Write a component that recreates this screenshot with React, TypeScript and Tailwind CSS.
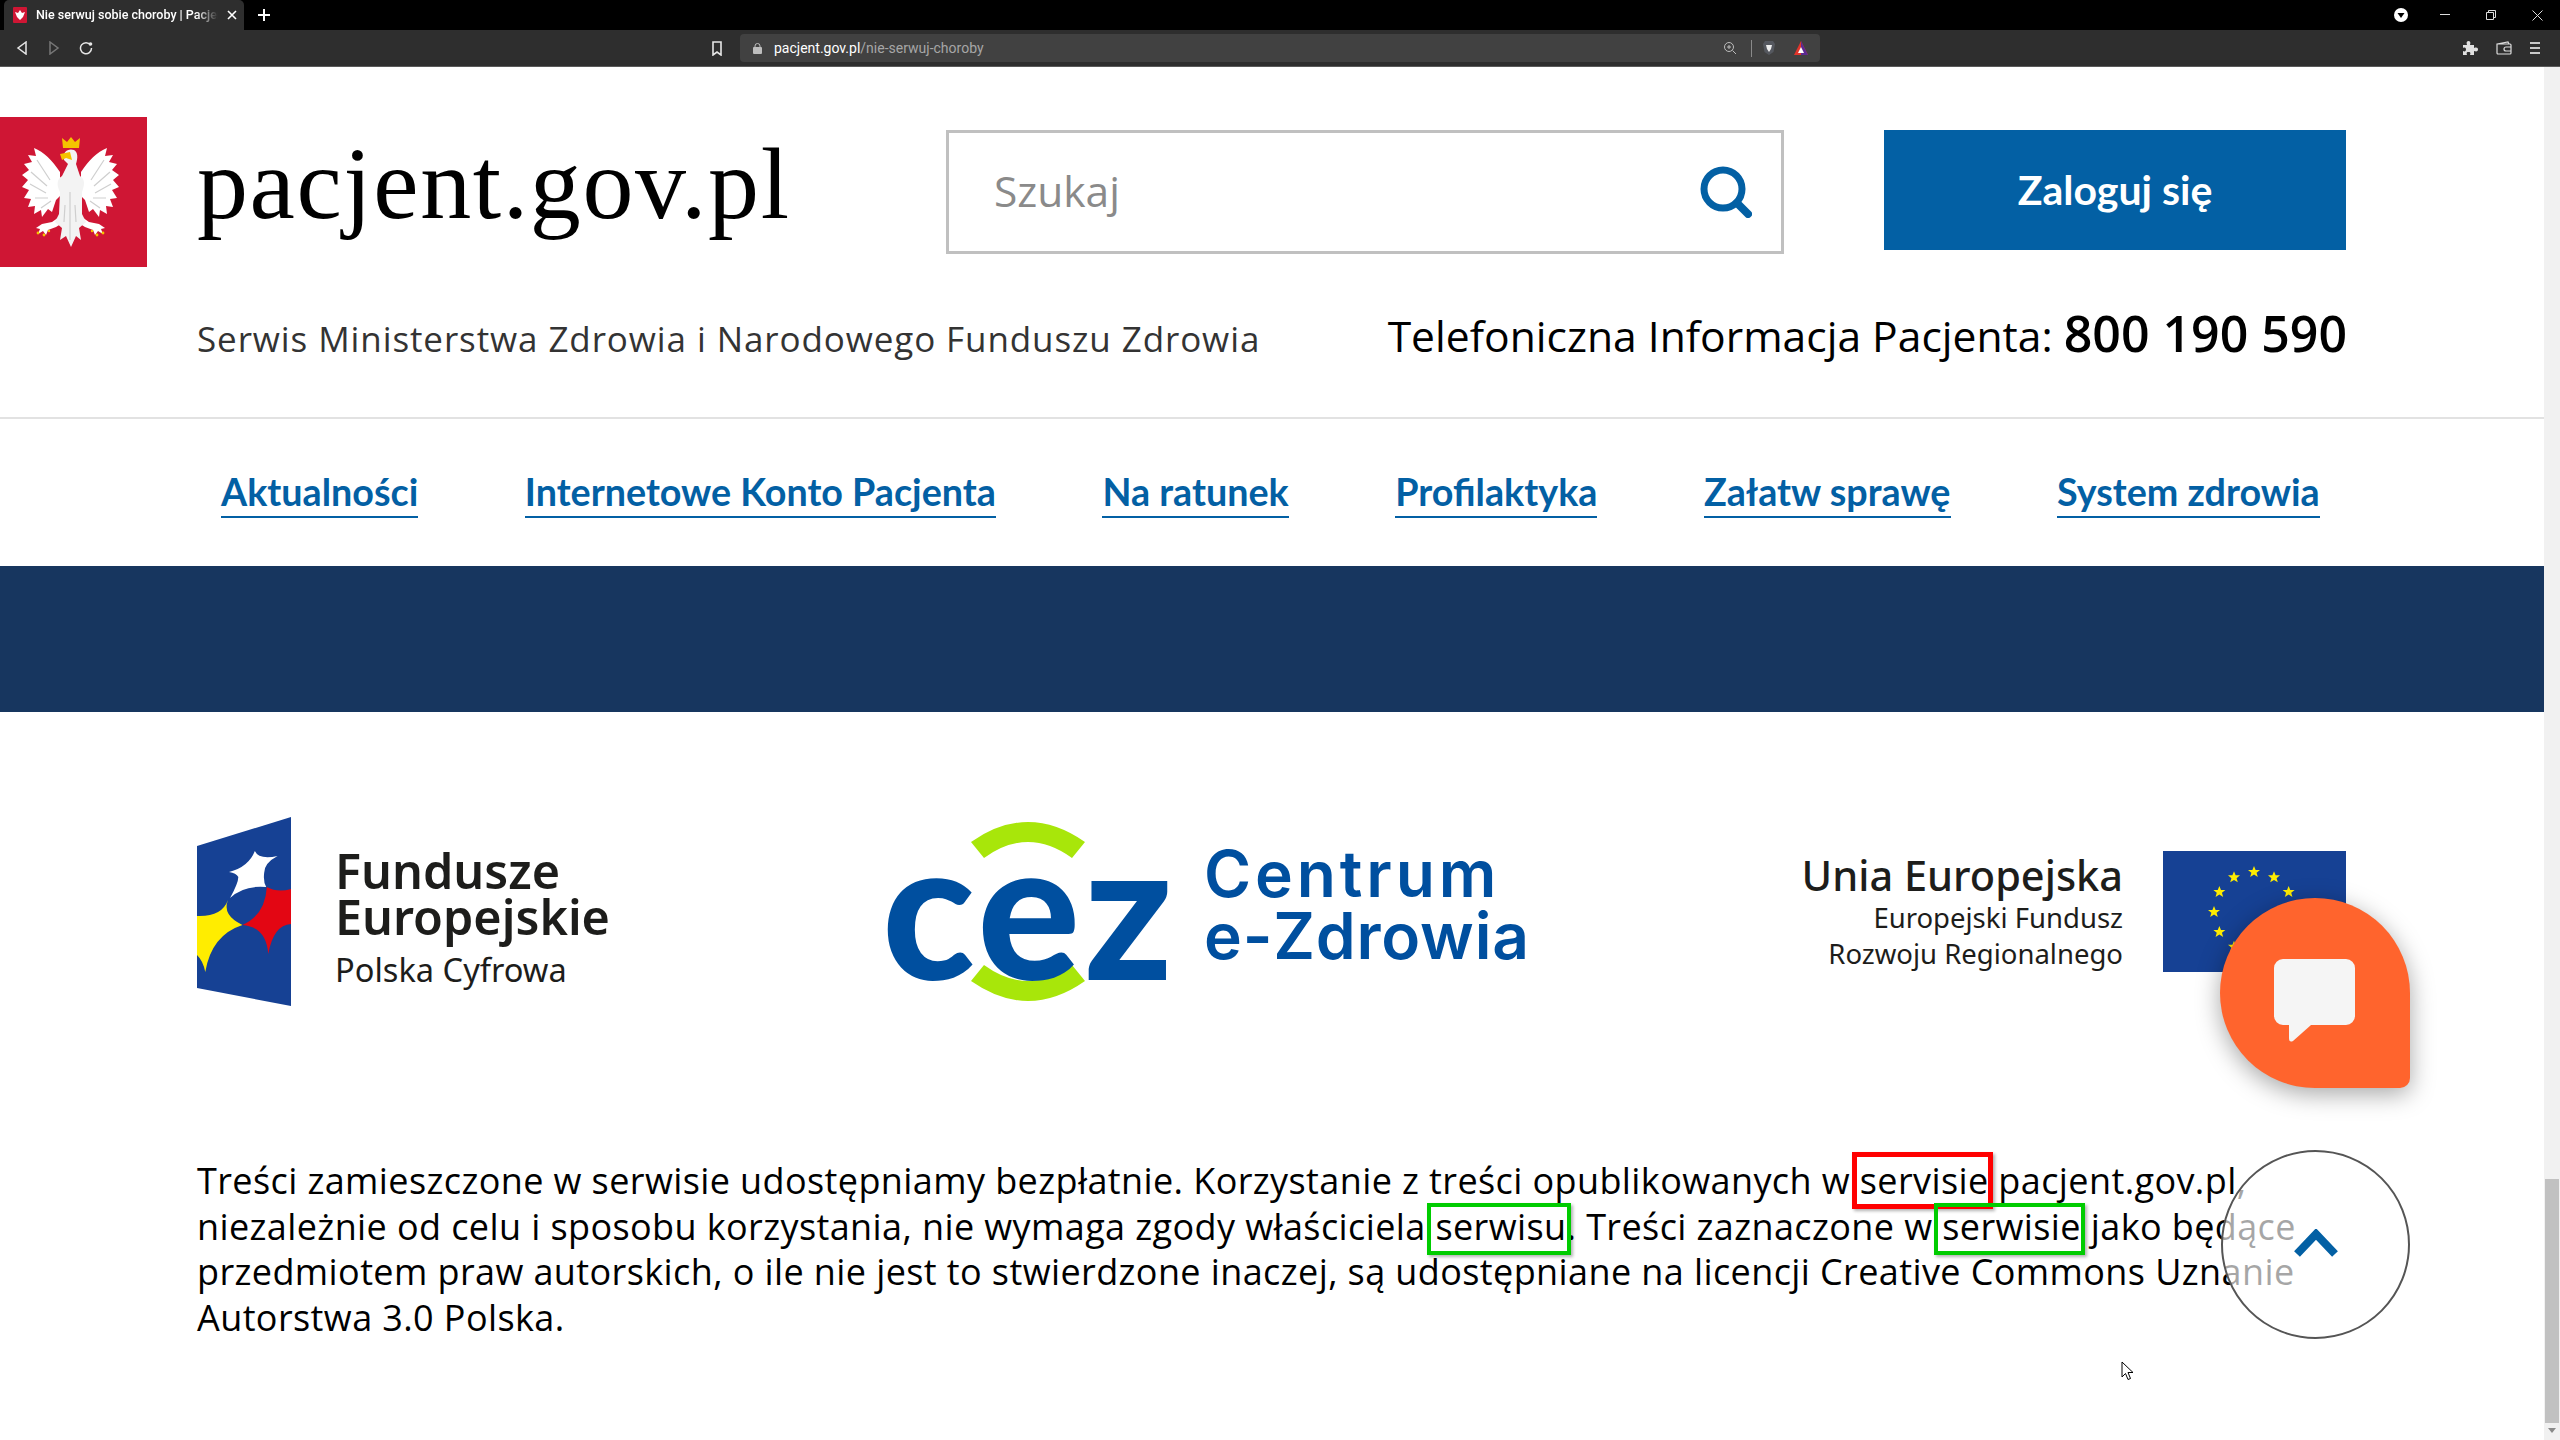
const openSans = "font-['Open_Sans',sans-serif]";

const navItems = [
  "Aktualności",
  "Internetowe Konto Pacjenta",
  "Na ratunek",
  "Profilaktyka",
  "Załatw sprawę",
  "System zdrowia",
];

function EagleWing() {
  return (
    <g>
      <path
        d="M60 172 C52 160 44 152 34 148 L36 156 L28 155 L32 162 L24 164 L29 170 L22 175 L28 180 L22 187 L29 190 L24 198 L31 199 L28 207 L35 206 L34 214 L41 210 L42 217 L48 209 L52 212 L56 200 L60 196 Z"
        fill="#fff"
      />
      <path
        d="M37 160 L50 180 M31 172 L47 186 M30 184 L46 193 M35 198 L48 198 M41 208 L51 201"
        stroke="#cfcfcf"
        strokeWidth="1.2"
        fill="none"
      />
      <path d="M62 215 L52 222 L42 224 L36 228 L40 229 L38 234 L43 231 L46 235 L48 230 L56 227 L64 222 Z" fill="#fff" />
      <circle cx="38" cy="233" r="1.4" fill="#f5c400" />
      <circle cx="44" cy="235" r="1.4" fill="#f5c400" />
      <circle cx="49" cy="231" r="1.2" fill="#f5c400" />
    </g>
  );
}

function EagleLogo() {
  return (
    <svg width="147" height="150" viewBox="0 117 147 150" className="shrink-0 block">
      <rect x="0" y="117" width="147" height="150" fill="#cf1634" />
      <g>
        <EagleWing />
        <g transform="translate(141 0) scale(-1 1)">
          <EagleWing />
        </g>
        <path
          d="M64 160 C62 152 68 148 74 150 C78 152 78 158 76 164 L80 176 C86 180 84 186 82 192 L82 214 L86 222 L79 228 L81 240 L76 236 L71 247 L66 236 L60 240 L62 228 L55 222 L59 214 L60 192 C57 186 56 180 62 176 L68 164 Z"
          fill="#f3f3f3"
        />
        <path d="M70 192 L70 240 M65 205 L64 222 M75 205 L76 222" stroke="#cfcfcf" strokeWidth="1.2" fill="none" />
        <path d="M63 148 L62 138 L67 142 L71 137 L75 142 L80 138 L79 148 Z" fill="#f5c400" />
        <path d="M70 152 L60 154 L62 160 L66 158 L72 160 Z" fill="#f5c400" />
      </g>
    </svg>
  );
}

function FundFlag() {
  return (
    <svg width="94" height="189" viewBox="0 0 91 189" preserveAspectRatio="none" className="shrink-0 block">
      <polygon points="0,29 91,0 91,189 0,171" fill="#164194" />
      <path d="M56 34 Q60 43 78 39 Q65 46 65 56 Q64 65 67 70 Q45 68 32 81 Q40 66 40 60 Q38 56 31 55 Q50 50 56 34 Z" fill="#fff" />
      <path d="M67.6 70 Q78 76 91 72 L91 107 Q74 108 69 137 Q67 110 44 108 Q66 98 67.6 70 Z" fill="#e30613" />
      <path d="M0 99 Q24 100 30 83 Q24 98 44 108 Q14 118 8 155 Q6 144 0 138 Z" fill="#ffed00" />
    </svg>
  );
}

function CezMark() {
  return (
    <div className="relative w-[282px] h-[180px] shrink-0">
      <svg width="282" height="180" viewBox="887 822 282 180" className="block">
        <path d="M967 842 Q1024 802 1081 842 L1068 858 Q1024 826 980 858 Z" fill="#a8e60a" />
        <path d="M967 981 Q1024 1021 1081 981 L1068 965 Q1024 997 980 965 Z" fill="#a8e60a" />
      </svg>
      <span className="absolute left-[-9px] top-[-12px] font-['Lato',sans-serif] font-black text-[192px] leading-[192px] tracking-[4px] text-[#004f9f]">
        cez
      </span>
    </div>
  );
}

function EuFlag() {
  const stars = Array.from({ length: 12 }, (_, i) => {
    const a = (i * 30 * Math.PI) / 180;
    return { x: 91 + 40 * Math.sin(a), y: 61 - 40 * Math.cos(a) };
  });
  return (
    <svg width="183" height="121" viewBox="0 0 183 121" className="shrink-0 block">
      <rect width="183" height="121" fill="#164194" />
      {stars.map((s, i) => (
        <polygon
          key={i}
          transform={`translate(${s.x} ${s.y})`}
          points="0,-6 1.6,-2 6,-2 2.6,0.8 3.8,5 0,2.6 -3.8,5 -2.6,0.8 -6,-2 -1.6,-2"
          fill="#ffed00"
        />
      ))}
    </svg>
  );
}

function BrowserChrome() {
  return (
    <div className="shrink-0 font-['Roboto',sans-serif]">
      <div className="h-[30px] bg-black flex items-end relative">
        <div className="ml-[4px] w-[240px] h-[30px] bg-[#2e2e2e] rounded-t-[5px] flex items-center pl-[9px] text-white">
          <svg width="14" height="16" viewBox="0 0 14 16" className="shrink-0">
            <rect width="14" height="16" rx="1" fill="#cf1634" />
            <path d="M7 3 L9 6 L12 5 L10 10 L7 13 L4 10 L2 5 L5 6 Z" fill="#fff" />
          </svg>
          <span className="ml-[9px] w-[182px] whitespace-nowrap text-[12.5px] font-medium leading-[30px] [mask-image:linear-gradient(to_right,black_88%,transparent)]">
            Nie serwuj sobie choroby | Pacjen
          </span>
          <svg width="10" height="10" viewBox="0 0 10 10" className="ml-[9px] shrink-0">
            <path d="M1 1 L9 9 M9 1 L1 9" stroke="#fff" strokeWidth="1.6" />
          </svg>
        </div>
        <svg width="12" height="12" viewBox="0 0 12 12" className="ml-[14px] mb-[9px]">
          <path d="M6 0 V12 M0 6 H12" stroke="#fff" strokeWidth="2" />
        </svg>
        <div className="ml-auto flex items-center h-[30px]">
          <svg width="14" height="14" viewBox="0 0 14 14" className="mr-[32px]">
            <circle cx="7" cy="7" r="7" fill="#fff" />
            <path d="M3.5 5 H10.5 L7 10 Z" fill="#000" />
          </svg>
          <svg width="10" height="2" viewBox="0 0 10 2" className="mr-[36px]">
            <rect width="10" height="1" fill="#ddd" />
          </svg>
          <svg width="10" height="10" viewBox="0 0 10 10" className="mr-[36px]">
            <path d="M0.5 2.5 H7.5 V9.5 H0.5 Z M2.5 2.5 V0.5 H9.5 V7.5 H7.5" stroke="#ddd" fill="none" />
          </svg>
          <svg width="11" height="11" viewBox="0 0 11 11" className="mr-[17px]">
            <path d="M0.5 0.5 L10.5 10.5 M10.5 0.5 L0.5 10.5" stroke="#ddd" />
          </svg>
        </div>
      </div>
      <div className="h-[37px] bg-[#2e2e2e] border-b border-b-[#5a5a5a] flex items-center">
        <svg width="12" height="14" viewBox="0 0 12 14" className="ml-[16px]">
          <path d="M10 1 L2 7 L10 13 Z" fill="none" stroke="#e6e6e6" strokeWidth="1.5" />
        </svg>
        <svg width="12" height="14" viewBox="0 0 12 14" className="ml-[20px]">
          <path d="M2 1 L10 7 L2 13 Z" fill="none" stroke="#777" strokeWidth="1.5" />
        </svg>
        <svg width="14" height="14" viewBox="0 0 14 14" className="ml-[19px]">
          <path d="M11.5 4 A5.5 5.5 0 1 0 12.5 7" fill="none" stroke="#e6e6e6" strokeWidth="1.5" />
          <circle cx="11.5" cy="3" r="1.8" fill="#e6e6e6" />
        </svg>
        <svg width="10" height="15" viewBox="0 0 10 15" className="ml-[619px]">
          <path d="M1 1 H9 V14 L5 11 L1 14 Z" fill="none" stroke="#e6e6e6" strokeWidth="1.6" />
        </svg>
        <div className="ml-[18px] w-[1080px] h-[28px] rounded-[4px] bg-[#414141] flex items-center pl-[13px] pr-[11px]">
          <svg width="9" height="11" viewBox="0 0 9 11" className="shrink-0">
            <rect y="4" width="9" height="7" rx="1" fill="#bdbdbd" />
            <path d="M2 4 V3 A2.5 2.5 0 0 1 7 3 V4" fill="none" stroke="#bdbdbd" />
          </svg>
          <span className="ml-[12px] text-[14px] text-white whitespace-nowrap">
            pacjent.gov.pl<span className="text-[#a6a6a6]">/nie-serwuj-choroby</span>
          </span>
          <svg width="14" height="14" viewBox="0 0 14 14" className="ml-auto mr-[2px] shrink-0">
            <circle cx="6" cy="6" r="4.5" fill="none" stroke="#bdbdbd" />
            <path d="M9.5 9.5 L13 13 M4 6 H8 M6 4 V8" stroke="#bdbdbd" />
          </svg>
          <div className="ml-[12px] w-px h-[17px] bg-[#8a8a8a]" />
          <svg width="14" height="16" viewBox="0 0 14 16" className="ml-[10px] shrink-0">
            <path d="M3 1 H11 L13 4 L11.5 12 L7 15 L2.5 12 L1 4 Z" fill="#55585f" />
            <path d="M4 5 H10 L9 9 L7 12 L5 9 Z" fill="#eee" />
          </svg>
          <svg width="16" height="16" viewBox="0 0 16 16" className="ml-[17px] shrink-0">
            <polygon points="8,1 15,15 1,15" fill="#e0352b" />
            <polygon points="8,1 15,15 8,15" fill="#5b2a91" />
            <polygon points="8,7 11,13 5,13" fill="#fff" />
          </svg>
        </div>
        <svg width="16" height="16" viewBox="0 0 16 16" className="ml-[642px]">
          <path d="M1 5 H5 C4 2 5 1 6.5 1 C8 1 9 2 8 5 H12 V8 C15 7 16 8 16 9.5 C16 11 15 12 12 11 V15 H8 C9 12.5 8 12 6.5 12 C5 12 4 12.5 5 15 H1 V11 C3 12 4 11 4 9.5 C4 8 3 7 1 8 Z" fill="#e0e0e0" />
        </svg>
        <svg width="16" height="14" viewBox="0 0 16 14" className="ml-[18px]">
          <path d="M1 3 L12 1 L13 3 M1 3 H14 A1 1 0 0 1 15 4 V12 A1 1 0 0 1 14 13 H2 A1 1 0 0 1 1 12 Z M15 6 H10 A2 2 0 0 0 10 10 H15" fill="none" stroke="#ddd" strokeWidth="1.2" />
        </svg>
        <svg width="10" height="12" viewBox="0 0 10 12" className="ml-[18px]">
          <path d="M0 1 H10 M0 6 H10 M0 11 H10" stroke="#c9c9c9" strokeWidth="2" />
        </svg>
      </div>
    </div>
  );
}

function Marked({ color, tall, children }: { color: string; tall?: boolean; children: string }) {
  return (
    <span className="relative">
      {children}
      <span
        className={`absolute left-[-8px] right-[-4px] shadow-[2px_2px_3px_rgba(0,0,0,0.3)] ${tall ? "top-[-4px] bottom-[-4px] border-[5px]" : "top-[1px] bottom-[-4px] border-[4px]"}`}
        style={{ borderColor: color }}
      />
    </span>
  );
}

export default function App() {
  return (
    <div className="w-[2560px] h-[1440px] overflow-hidden flex flex-col bg-white relative">
      <BrowserChrome />
      <div className="flex flex-1 min-h-0">
        <main className="flex-1 min-w-0">
          <header className="h-[352px] border-b-2 border-b-[#e2e2e2]">
            <div className="flex items-start pt-[50px]">
              <EagleLogo />
              <div className="ml-[50px] w-[597px] font-['Liberation_Serif',serif] text-[102px] leading-[102px] tracking-[1.6px] text-black mt-[16px] whitespace-nowrap">
                pacjent.gov.pl
              </div>
              <div className="ml-[152px] mt-[13px] w-[838px] h-[124px] border-[3px] border-[#c0c0c0] flex items-center pl-[45px] pr-[29px]">
                <span className={`${openSans} text-[42.5px] text-[#8a8a8a] mb-[2px]`}>Szukaj</span>
                <svg width="52" height="52" viewBox="0 0 52 52" className="ml-auto">
                  <circle cx="23" cy="23" r="19" fill="none" stroke="#0360a4" strokeWidth="7" />
                  <path d="M37 37 L48 48" stroke="#0360a4" strokeWidth="8" strokeLinecap="round" />
                </svg>
              </div>
              <button className="ml-[100px] mt-[13px] w-[462px] h-[120px] bg-[#0360a4] text-white font-['Lato',sans-serif] font-bold text-[41px]">
                Zaloguj się
              </button>
            </div>
            <div className={`${openSans} flex justify-between items-baseline px-[197px] mt-[29px]`}>
              <span className="text-[35px] tracking-[0.9px] text-[#333]">
                Serwis Ministerstwa Zdrowia i Narodowego Funduszu Zdrowia
              </span>
              <span className="text-[42.6px] text-black">
                Telefoniczna Informacja Pacjenta: <span className="text-[50px] font-semibold">800 190 590</span>
              </span>
            </div>
          </header>

          <nav className="h-[147px] flex items-center gap-[106.5px] pl-[221px] pb-[1px] font-['Lato',sans-serif] font-bold text-[37.7px] text-[#0360a4]">
            {navItems.map((item) => (
              <a key={item} className="border-b-2 border-b-[#0360a4] leading-[49px] whitespace-nowrap">
                {item}
              </a>
            ))}
          </nav>

          <div className="h-[146px] bg-[#17365f]" />

          <div className="flex items-start px-[197px] pt-[105px]">
            <div className="flex">
              <FundFlag />
              <div className="ml-[44px] mt-[30px] font-['Noto_Sans',sans-serif] text-[#1d1d1b]">
                <div className="text-[48.5px] leading-[46px] font-semibold">Fundusze</div>
                <div className="text-[48.5px] leading-[46px] font-semibold">Europejskie</div>
                <div className="text-[32.6px] leading-[44px] mt-[9px]">Polska Cyfrowa</div>
              </div>
            </div>
            <div className="flex ml-[281px] mt-[5px]">
              <CezMark />
              <div className="ml-[31px] mt-[21px] font-['Inter',sans-serif] font-semibold text-[#004f9f] text-[64px] leading-[62px]">
                <div className="tracking-[3.9px]">Centrum</div>
                <div className="tracking-[0.8px]">e-Zdrowia</div>
              </div>
            </div>
            <div className="flex ml-auto mt-[34px] mr-[1px]">
              <div className="text-right font-['Noto_Sans',sans-serif] text-[#1d1d1b] mr-[40px]">
                <div className="text-[41.5px] leading-[48px] font-medium mb-[1px]">Unia Europejska</div>
                <div className="text-[27.5px] leading-[36px] mt-[1px]">Europejski Fundusz</div>
                <div className="text-[27.5px] leading-[36px]">Rozwoju Regionalnego</div>
              </div>
              <EuFlag />
            </div>
          </div>

          <p className={`${openSans} mx-[197px] mt-[152px] text-[36px] leading-[45.7px] tracking-[0.4px] text-black`}>
            Treści zamieszczone w serwisie udostępniamy bezpłatnie. Korzystanie z treści opublikowanych w{" "}
            <Marked color="#ff0000" tall>servisie</Marked> pacjent.gov.pl, niezależnie od celu i sposobu korzystania, nie wymaga zgody właściciela{" "}
            <Marked color="#00cc00">serwisu</Marked>. Treści zaznaczone w <Marked color="#00cc00">serwisie</Marked> jako będące przedmiotem praw autorskich, o ile nie jest to stwierdzone inaczej, są udostępniane na licencji Creative Commons Uznanie Autorstwa 3.0 Polska.
          </p>
        </main>

        <aside className="w-[16px] shrink-0 bg-[#f1f1f1] flex flex-col items-center">
          <div className="h-[1112px]" />
          <div className="w-[14px] h-[244px] bg-[#c1c1c1]" />
          <svg width="8" height="5" viewBox="0 0 8 5" className="mt-[5px]">
            <polygon points="0,0 8,0 4,5" fill="#8a8a8a" />
          </svg>
        </aside>
      </div>

      <div className="absolute left-[2220px] top-[898px] w-[190px] h-[190px] rounded-[95px_95px_10px_95px] bg-[#ff642d] shadow-[0_6px_24px_rgba(0,0,0,0.35)] flex items-start justify-center">
        <svg width="84" height="84" viewBox="0 0 84 84" className="mt-[60px]">
          <path d="M10 1 H73 A9 9 0 0 1 82 10 V58 A9 9 0 0 1 73 67 H38 L20 83 Q16 85 16 80 V67 H10 A9 9 0 0 1 1 58 V10 A9 9 0 0 1 10 1 Z" fill="#f5f5f5" />
        </svg>
      </div>

      <div className="absolute left-[2221px] top-[1150px] w-[189px] h-[189px] rounded-full border-2 border-[#555] bg-white/65 flex items-center justify-center">
        <svg width="44" height="28" viewBox="0 0 44 28" className="mb-[3px]">
          <path d="M3 25 L22 5 L41 25" fill="none" stroke="#0360a4" strokeWidth="8" />
        </svg>
      </div>

      <svg width="13" height="20" viewBox="0 0 13 20" className="absolute left-[2121px] top-[1361px]">
        <path d="M1 1 V16 L4.5 12.5 L7 18.5 L9.5 17.5 L7 11.5 H12 Z" fill="#fff" stroke="#000" />
      </svg>
    </div>
  );
}
